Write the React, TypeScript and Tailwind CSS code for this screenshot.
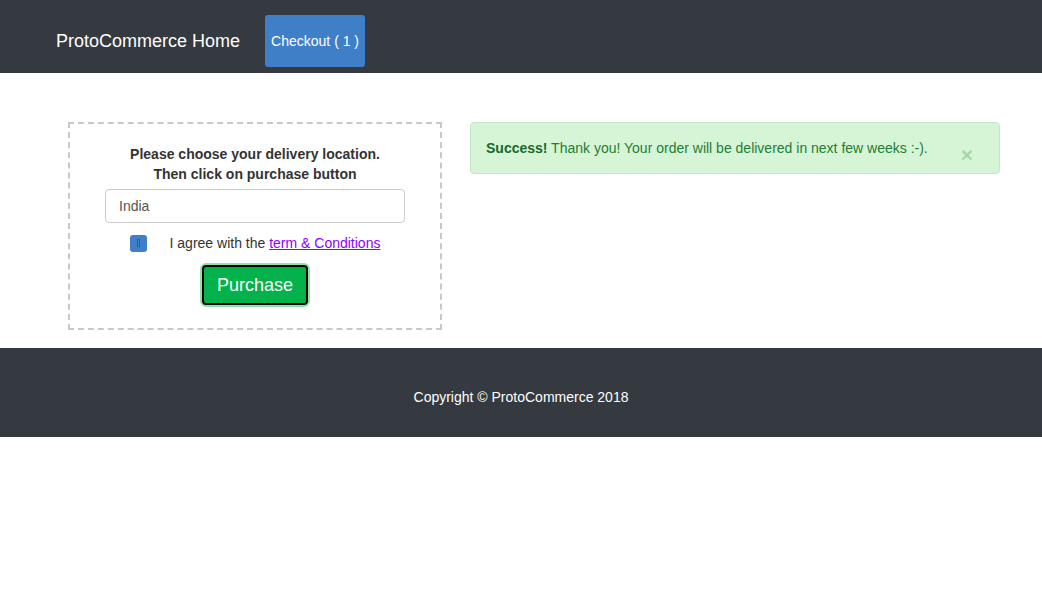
import { useState } from "react";

const Navbar: React.FC = () => (
  <nav className="h-[73px] bg-[#343a40] pt-[15px] pl-[56px]">
    <div className="flex items-center h-[52px]">
      <a href="#" className="text-[18px] text-white leading-none">ProtoCommerce Home</a>
      <button type="button" className="ml-[25px] h-[52px] w-[100px] rounded-[3px] bg-[#3f7fc8] text-[14px] text-white">
        Checkout ( 1 )
      </button>
    </div>
  </nav>
);

const DeliveryForm: React.FC = () => {
  const [country, setCountry] = useState("India");
  return (
    <div className="w-[374px] h-[208px] border-2 border-dashed border-[#c8c8c8] flex flex-col items-center pt-[20px]">
      <p className="text-[14px] font-bold leading-[20px] text-[#333] text-center">
        Please choose your delivery location.
        <br />
        Then click on purchase button
      </p>
      <input
        value={country}
        onChange={(e) => setCountry(e.target.value)}
        className="mt-[5px] h-[34px] w-[300px] rounded-[4px] border border-[#ccc] px-[13px] text-[14px] text-[#555] outline-none"
      />
      <div className="mt-[10px] flex items-center h-[20px]">
        <span className="relative w-[17px] h-[17px] rounded-[3px] bg-[#3f7fc8] flex items-center justify-center">
          <span className="w-[3px] h-[8px] border border-[#2d5f99]" />
        </span>
        <label className="ml-[23px] text-[14px] text-[#333]">
          I agree with the <a href="#" className="underline text-[#9000ff]">term &amp; Conditions</a>
        </label>
      </div>
      <div className="mt-[10px] rounded-[6px] border-2 border-[#8fe3a8]">
        <button type="button" className="h-[40px] w-[106px] rounded-[4px] border-2 border-black bg-[#03b24b] text-[18px] text-white">
          Purchase
        </button>
      </div>
    </div>
  );
};

const SuccessAlert: React.FC = () => (
  <div className="flex-1 h-[52px] rounded-[4px] border border-[#c3e6cb] bg-[#d6f5d6] flex items-start pl-[15px] pr-[26px]">
    <p className="flex-1 mt-[15px] text-[14px] leading-[20px] text-[#1f7d35]">
      <strong className="text-[#176a2c]">Success!</strong> Thank you! Your order will be delivered in next few weeks :-).
    </p>
    <button type="button" className="mt-[22px] text-[21px] font-bold leading-[20px] text-[#1f7d35] opacity-25">
      ×
    </button>
  </div>
);

const App: React.FC = () => (
  <div className="min-h-[593px] bg-white font-['Liberation_Sans',Arial,sans-serif]">
    <Navbar />
    <main className="flex items-start gap-[28px] pl-[68px] pr-[42px] pt-[49px] pb-[18px]">
      <DeliveryForm />
      <SuccessAlert />
    </main>
    <footer className="h-[89px] bg-[#343a40] pt-[39px] text-center">
      <p className="text-[14px] leading-[20px] text-white">Copyright © ProtoCommerce 2018</p>
    </footer>
  </div>
);

export default App;
